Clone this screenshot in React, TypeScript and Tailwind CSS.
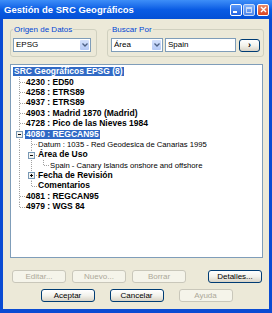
import React from 'react';

type Cell = 'pipe' | 'tee' | 'elbow' | 'blank';

interface TreeRow {
  label: string;
  cells: Cell[];
  bold?: boolean;
  selected?: boolean;
  toggle?: 'minus' | 'plus';
}

const rows: TreeRow[] = [
  { label: 'SRC Geográficos EPSG (8)', cells: [], bold: true, selected: true },
  { label: '4230 : ED50', cells: ['tee'], bold: true },
  { label: '4258 : ETRS89', cells: ['tee'], bold: true },
  { label: '4937 : ETRS89', cells: ['tee'], bold: true },
  { label: '4903 : Madrid 1870 (Madrid)', cells: ['tee'], bold: true },
  { label: '4728 : Pico de las Nieves 1984', cells: ['tee'], bold: true },
  { label: '4080 : REGCAN95', cells: ['tee'], bold: true, selected: true, toggle: 'minus' },
  { label: 'Datum : 1035 - Red Geodesica de Canarias 1995', cells: ['pipe', 'tee'] },
  { label: 'Área de Uso', cells: ['pipe', 'tee'], bold: true, toggle: 'minus' },
  { label: 'Spain - Canary Islands onshore and offshore', cells: ['pipe', 'pipe', 'elbow'] },
  { label: 'Fecha de Revisión', cells: ['pipe', 'tee'], bold: true, toggle: 'plus' },
  { label: 'Comentarios', cells: ['pipe', 'elbow'], bold: true },
  { label: '4081 : REGCAN95', cells: ['tee'], bold: true },
  { label: '4979 : WGS 84', cells: ['elbow'], bold: true },
];

const TreeCell: React.FC<{ kind: Cell; toggle?: 'minus' | 'plus' }> = ({ kind, toggle }) => (
  <svg width="12" height="10.4" viewBox="0 0 12 10.4" className="block shrink-0">
    {kind !== 'blank' && (
      <line x1="6.5" y1="0" x2="6.5" y2={kind === 'elbow' ? 5.5 : 10.4} stroke="#A0A0A0" strokeDasharray="1 1" />
    )}
    {(kind === 'tee' || kind === 'elbow') && (
      <line x1="7" y1="5.5" x2="12" y2="5.5" stroke="#A0A0A0" strokeDasharray="1 1" />
    )}
    {toggle && (
      <g>
        <rect x="3.5" y="2.5" width="6" height="6" fill="#F4F4F0" stroke="#7898B5" strokeWidth="1" />
        <line x1="5" y1="5.5" x2="8" y2="5.5" stroke="#000" strokeWidth="1" />
        {toggle === 'plus' && <line x1="6.5" y1="4" x2="6.5" y2="7" stroke="#000" strokeWidth="1" />}
      </g>
    )}
  </svg>
);

const XpButton: React.FC<{ label: string; disabled?: boolean; className?: string }> = ({ label, disabled, className = '' }) => (
  <div
    className={`h-[13px] flex items-center justify-center rounded-[3px] border text-[8px] leading-none ${
      disabled
        ? 'border-[#C9C7BA] bg-[#F5F4EA] text-[#ACA899]'
        : 'border-[#003C74] bg-gradient-to-b from-white via-[#F3F2EC] to-[#D8D3C6] text-black'
    } ${className}`}
  >
    {label}
  </div>
);

const Combo: React.FC<{ value: string; className?: string }> = ({ value, className = '' }) => (
  <div className={`h-[14px] flex items-stretch border border-[#7F9DB9] bg-white ${className}`}>
    <div className="flex-1 flex items-center pl-[2px] text-[8px] leading-none text-black">{value}</div>
    <div className="m-[1px] w-[9px] flex items-center justify-center rounded-[1px] bg-gradient-to-b from-[#D4E1FC] to-[#B4C9F6]">
      <svg width="6" height="4" viewBox="0 0 6 4">
        <path d="M0.5 0.5 L3 3 L5.5 0.5" fill="none" stroke="#4D6185" strokeWidth="1.3" />
      </svg>
    </div>
  </div>
);

export default function App() {
  return (
    <div className="w-[272px] h-[313px] flex flex-col bg-[#0A4BD3] font-['Liberation_Sans',Arial,sans-serif] overflow-hidden">
      {/* title bar */}
      <div className="h-[19px] shrink-0 flex items-center pl-[4px] pr-[3px] bg-gradient-to-b from-[#3D8EF8] via-[#0A5CE4] to-[#0450D6]">
        <span className="flex-1 text-white font-bold text-[9.5px] leading-none">Gestión de SRC Geográficos</span>
        <div className="flex items-center gap-[1px]">
          <div className="w-[12px] h-[12px] rounded-[2px] border border-white bg-gradient-to-b from-[#5B9BFA] to-[#2462E0] flex items-end pl-[2px] pb-[2px]">
            <div className="w-[4px] h-[2px] bg-white" />
          </div>
          <div className="w-[12px] h-[12px] rounded-[2px] border border-[#C9DAF8] bg-gradient-to-b from-[#7EB0FA] to-[#4E86EA] flex items-center justify-center">
            <div className="w-[6px] h-[6px] border border-[#C9DAF8] border-t-2" />
          </div>
          <div className="ml-[1px] w-[12px] h-[12px] rounded-[2px] border border-white bg-gradient-to-b from-[#EA8A68] to-[#D9421E] flex items-center justify-center">
            <svg width="7" height="7" viewBox="0 0 7 7">
              <path d="M1 1 L6 6 M6 1 L1 6" stroke="#fff" strokeWidth="1.4" />
            </svg>
          </div>
        </div>
      </div>

      {/* body */}
      <div className="flex-1 mx-[3px] mb-[4px] bg-[#ECE9D8] pl-[7px] pr-[6px] pt-[6px] pb-[7px] flex flex-col">
        <div className="flex gap-[10px]">
          <fieldset className="w-[87px] border border-[#D0D0BF] rounded-[3px] pl-[2px] pr-[5px] pt-[4px] pb-[4px]">
            <legend className="text-[8px] leading-[9px] text-[#0046D5] px-[1px]">Origen de Datos</legend>
            <Combo value="EPSG" className="w-[78px]" />
          </fieldset>
          <fieldset className="flex-1 border border-[#D0D0BF] rounded-[3px] pl-[3px] pr-[3px] pt-[4px] pb-[4px]">
            <legend className="text-[8px] leading-[9px] text-[#0046D5] px-[1px]">Buscar Por</legend>
            <div className="flex items-center">
              <Combo value="Área" className="w-[52px]" />
              <div className="ml-[2px] w-[71px] h-[14px] border border-[#7F9DB9] bg-white flex items-center pl-[2px] text-[8px] leading-none">Spain</div>
              <XpButton label="›" className="ml-[3px] w-[21px] text-[9px] font-bold" />
            </div>
          </fieldset>
        </div>

        <div className="mt-[7px] flex-1 border border-[#7F9DB9] bg-white pl-[2px] pt-[1.5px]">
          {rows.map((row, i) => (
            <div key={i} className="h-[10.4px] flex items-center">
              {row.cells.map((c, j) => (
                <TreeCell key={j} kind={c} toggle={j === row.cells.length - 1 ? row.toggle : undefined} />
              ))}
              <span
                className={`h-[9px] px-[1px] leading-[9px] whitespace-nowrap ${
                  row.bold ? 'font-bold text-[8.5px]' : 'text-[7.7px]'
                } ${row.selected ? 'bg-[#316AC5] text-white' : 'text-black'}`}
              >
                {row.label}
              </span>
            </div>
          ))}
        </div>

        <div className="mt-[12px] flex items-center pl-[2px] pr-[1px] gap-[6px]">
          <XpButton label="Editar..." disabled className="w-[54px]" />
          <XpButton label="Nuevo..." disabled className="w-[54px]" />
          <XpButton label="Borrar" disabled className="w-[54px]" />
          <XpButton label="Detalles..." className="ml-auto w-[54px]" />
        </div>
        <div className="mt-[6px] flex items-center justify-center gap-[15px]">
          <XpButton label="Aceptar" className="w-[54px]" />
          <XpButton label="Cancelar" className="w-[54px]" />
          <XpButton label="Ayuda" disabled className="w-[54px]" />
        </div>
      </div>
    </div>
  );
}
